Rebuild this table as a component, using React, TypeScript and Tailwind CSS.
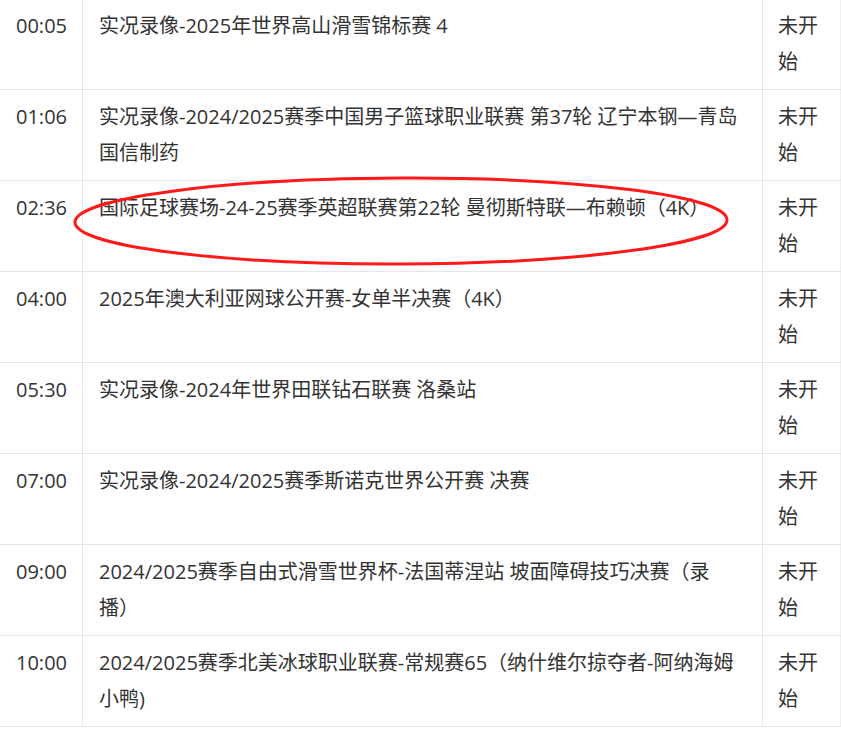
import React from 'react'

type Row = { time: string; title: string }

const rows: Row[] = [
  { time: '00:05', title: '实况录像-2025年世界高山滑雪锦标赛 4' },
  { time: '01:06', title: '实况录像-2024/2025赛季中国男子篮球职业联赛 第37轮 辽宁本钢—青岛国信制药' },
  { time: '02:36', title: '国际足球赛场-24-25赛季英超联赛第22轮 曼彻斯特联—布赖顿（4K）' },
  { time: '04:00', title: '2025年澳大利亚网球公开赛-女单半决赛（4K）' },
  { time: '05:30', title: '实况录像-2024年世界田联钻石联赛 洛桑站' },
  { time: '07:00', title: '实况录像-2024/2025赛季斯诺克世界公开赛 决赛' },
  { time: '09:00', title: '2024/2025赛季自由式滑雪世界杯-法国蒂涅站 坡面障碍技巧决赛（录播）' },
  { time: '10:00', title: '2024/2025赛季北美冰球职业联赛-常规赛65（纳什维尔掠夺者-阿纳海姆小鸭)' },
]

export default function App() {
  return (
    <div
      className="relative w-[841px] h-[747px] overflow-hidden bg-white text-[#333] text-[20px] leading-[36px] [text-spacing-trim:space-all]"
      style={{ fontFamily: '"Open Sans", "Noto Sans CJK SC", sans-serif' }}
    >
      <div className="-mt-px w-[841px]">
        {rows.map((r) => (
          <div key={r.time} className="grid grid-cols-[83px_680px_78px] border-b border-[#e6e6e6]">
            <div className="border-r border-[#e6e6e6] pl-4 py-[9px]">{r.time}</div>
            <div className="border-r border-[#e6e6e6] pl-4 pr-4 py-[9px]">{r.title}</div>
            <div className="border-r border-[#f0f0f0] pl-[15px] pr-4 py-[9px]">未开始</div>
          </div>
        ))}
      </div>
      <svg className="absolute left-0 top-0 pointer-events-none" width="841" height="747">
        <ellipse cx="401" cy="221" rx="326" ry="43" fill="none" stroke="#ff1a1a" strokeWidth="3" transform="rotate(-0.2 401 221)" />
      </svg>
    </div>
  )
}
